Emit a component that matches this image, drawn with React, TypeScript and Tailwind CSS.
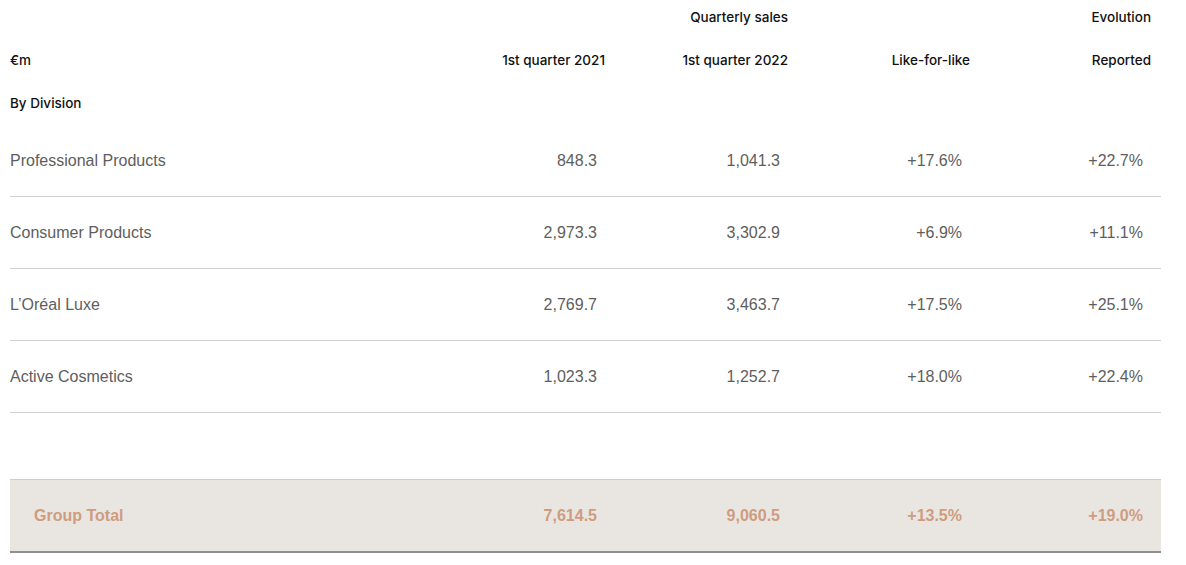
import React from "react";

interface Row {
  label: string;
  q2021: string;
  q2022: string;
  lfl: string;
  reported: string;
}

const rows: Row[] = [
  { label: "Professional Products", q2021: "848.3", q2022: "1,041.3", lfl: "+17.6%", reported: "+22.7%" },
  { label: "Consumer Products", q2021: "2,973.3", q2022: "3,302.9", lfl: "+6.9%", reported: "+11.1%" },
  { label: "L\u2019Oréal Luxe", q2021: "2,769.7", q2022: "3,463.7", lfl: "+17.5%", reported: "+25.1%" },
  { label: "Active Cosmetics", q2021: "1,023.3", q2022: "1,252.7", lfl: "+18.0%", reported: "+22.4%" },
];

const cols = "grid grid-cols-[423px_182px_183px_182px_181px]";

export default function App() {
  return (
    <div className="w-[1186px] h-[565px] bg-white pl-[10px] pr-[25px]" style={{ fontFamily: "'Liberation Sans', Arial, sans-serif" }}>
      {/* header */}
      <div className="text-[13.5px] font-medium text-[#111]" style={{ fontFamily: "Inter, 'Liberation Sans', sans-serif" }}>
        <div className={`${cols} h-[34px] items-center`}>
          <div></div>
          <div></div>
          <div className="text-right pr-[10px]">Quarterly sales</div>
          <div></div>
          <div className="text-right pr-[10px]">Evolution</div>
        </div>
        <div className={`${cols} h-[52px] items-center`}>
          <div>€m</div>
          <div className="text-right pr-[10px]">1st quarter 2021</div>
          <div className="text-right pr-[10px]">1st quarter 2022</div>
          <div className="text-right pr-[10px]">Like-for-like</div>
          <div className="text-right pr-[10px]">Reported</div>
        </div>
        <div className={`${cols} h-[34px] items-center`}>
          <div>By Division</div>
        </div>
      </div>

      <div className="mt-[5px]">
        {rows.map((r) => (
          <div key={r.label} className={`${cols} h-[72px] items-center border-b border-[#d2d2d2] text-[16px] text-[#5e5e5e]`}>
            <div>{r.label}</div>
            <div className="text-right pr-[18px]">{r.q2021}</div>
            <div className="text-right pr-[18px]">{r.q2022}</div>
            <div className="text-right pr-[18px]">{r.lfl}</div>
            <div className="text-right pr-[18px]">{r.reported}</div>
          </div>
        ))}
      </div>

      <div className={`${cols} mt-[66px] h-[74px] items-center bg-[#e9e6e2] border-t border-[#cfcccc] border-b-2 border-b-[#8f8f8f] text-[16px] font-bold text-[#cf9c7f]`}>
        <div className="pl-[24px]">Group Total</div>
        <div className="text-right pr-[18px]">7,614.5</div>
        <div className="text-right pr-[18px]">9,060.5</div>
        <div className="text-right pr-[18px]">+13.5%</div>
        <div className="text-right pr-[18px]">+19.0%</div>
      </div>
    </div>
  );
}
